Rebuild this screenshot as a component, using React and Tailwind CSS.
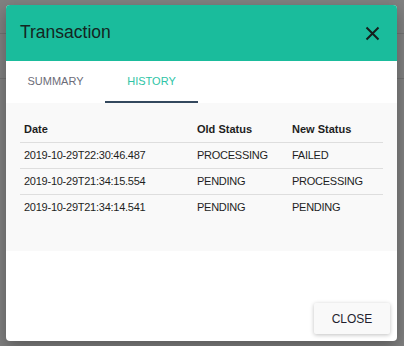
import React from 'react';

const rows = [
  { date: '2019-10-29T22:30:46.487', oldStatus: 'PROCESSING', newStatus: 'FAILED' },
  { date: '2019-10-29T21:34:15.554', oldStatus: 'PENDING', newStatus: 'PROCESSING' },
  { date: '2019-10-29T21:34:14.541', oldStatus: 'PENDING', newStatus: 'PENDING' },
];

export default function App() {
  return (
    <div className="relative w-[404px] h-[346px] bg-[#808080] overflow-hidden font-['Liberation_Sans',Arial,sans-serif]">
      {/* page underneath the backdrop */}
      <div className="h-[34px] border-b border-[#727272]" />
      <div className="h-[45px] border-b border-[#727272]" />

      {/* modal */}
      <div className="absolute inset-0 pt-[5px] pl-[6px]">
        <div className="w-[391px] h-[336px] bg-white rounded-[4px] overflow-hidden flex flex-col shadow-[0_6px_16px_rgba(0,0,0,0.3)]">
          {/* Header */}
          <div className="h-[56px] bg-[#1abc9c] flex items-center justify-between pl-[14px] pr-[17px] shrink-0">
            <h2 className="text-[17.5px] text-[#142622] leading-none">Transaction</h2>
            <svg width="15" height="15" viewBox="0 0 15 15" className="text-[#15201d]">
              <path d="M1.5 1.5 L13.5 13.5 M13.5 1.5 L1.5 13.5" stroke="currentColor" strokeWidth="2" />
            </svg>
          </div>

          {/* Tabs */}
          <div className="h-[42px] flex shrink-0">
            <div className="w-[99px] flex items-center justify-center text-[11px] text-[#6c6c78] pb-[2px]">
              SUMMARY
            </div>
            <div className="w-[93px] flex items-center justify-center text-[11px] text-[#2ec4a6] border-b-[2px] border-[#34495e]">
              HISTORY
            </div>
          </div>

          {/* Content */}
          <div className="bg-[#f9f9f9] pt-[13px] pb-[31px] px-[14px] shrink-0">
            <table className="w-[363px] border-collapse text-[11px] text-[#1e1e1e]">
              <thead>
                <tr className="h-[26px] border-b border-[#dedede]">
                  <th className="w-[173px] text-left font-bold pl-[4px]">Date</th>
                  <th className="w-[95px] text-left font-bold pl-[4px]">Old Status</th>
                  <th className="text-left font-bold pl-[4px]">New Status</th>
                </tr>
              </thead>
              <tbody className="tracking-[-0.25px]">
                {rows.map((r, i) => (
                  <tr key={i} className={i < rows.length - 1 ? 'h-[26px] border-b border-[#dedede]' : 'h-[26px]'}>
                    <td className="pl-[4px]">{r.date}</td>
                    <td className="pl-[4px]">{r.oldStatus}</td>
                    <td className="pl-[4px]">{r.newStatus}</td>
                  </tr>
                ))}
              </tbody>
            </table>
          </div>

          {/* Footer */}
          <div className="flex-1 flex items-end justify-end pr-[7px] pb-[7px]">
            <button className="w-[76px] h-[31px] bg-[#f9f9f9] rounded-[2px] text-[12px] text-[#1f1f2e] shadow-[0_1px_4px_rgba(0,0,0,0.25)]">
              CLOSE
            </button>
          </div>
        </div>
      </div>
    </div>
  );
}
